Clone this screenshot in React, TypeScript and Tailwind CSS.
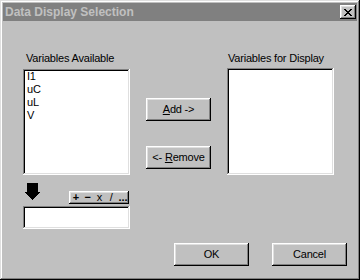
import React from "react";

const raised =
  "shadow-[inset_-1px_-1px_#000,inset_1px_1px_#fff,inset_-2px_-2px_#808080,inset_2px_2px_#dfdfdf]";
const sunken =
  "shadow-[inset_-1px_-1px_#fff,inset_1px_1px_#808080,inset_-2px_-2px_#dfdfdf,inset_2px_2px_#000]";

function CloseX() {
  return (
    <svg width="8" height="7" viewBox="0 0 8 7" shapeRendering="crispEdges">
      <path
        fill="#000"
        d="M0 0h2v1H0z M6 0h2v1H6z M1 1h2v1H1z M5 1h2v1H5z M2 2h4v1H2z M3 3h2v1H3z M2 4h4v1H2z M1 5h2v1H1z M5 5h2v1H5z M0 6h2v1H0z M6 6h2v1H6z"
      />
    </svg>
  );
}

function DownArrow() {
  return (
    <svg width="15" height="17" viewBox="0 0 15 17" shapeRendering="crispEdges">
      <polygon fill="#000" points="2,0 13,0 13,9 15,9 7.5,17 0,9 2,9" />
    </svg>
  );
}

export default function App() {
  return (
    <div className="w-[360px] h-[280px] bg-[#c0c0c0] p-[3px] flex flex-col font-['Liberation_Sans',Arial,sans-serif] text-[11px] leading-[13px] text-black tracking-[-0.2px] shadow-[inset_-1px_-1px_#000,inset_1px_1px_#dfdfdf,inset_-2px_-2px_#808080,inset_2px_2px_#fff]">
      {/* Title bar */}
      <div className="h-[18px] bg-[#808080] flex items-center pl-[2px] pr-[1px] shrink-0">
        <span className="text-[12px] font-bold text-[#c0c0c0] tracking-[0px]">
          Data Display Selection
        </span>
        <div className={`ml-auto w-[16px] h-[14px] bg-[#c0c0c0] flex items-center justify-center ${raised}`}>
          <CloseX />
        </div>
      </div>

      {/* Main row */}
      <div className="flex mt-[31px] pl-[20px]">
        {/* Left column */}
        <div className="w-[107px] flex flex-col">
          <div className="h-[13px] pl-[3px] whitespace-nowrap">Variables Available</div>
          <div className={`mt-[4px] h-[106px] bg-white pl-[4px] pt-[1px] ${sunken}`}>
            <div>I1</div>
            <div>uC</div>
            <div>uL</div>
            <div>V</div>
          </div>
          <div className="h-[31px] flex">
            <div className="mt-[8px] ml-[2px]">
              <DownArrow />
            </div>
            <div
              className={`ml-auto mr-[1px] self-end mb-[2px] w-[60px] h-[13px] flex items-center pl-[1px] font-bold text-[11px] leading-[13px] tracking-[0px] ${raised}`}
            >
              <span className="w-[12px] text-center">+</span>
              <span className="w-[12px] text-center">−</span>
              <span className="w-[12px] text-center font-normal">x</span>
              <span className="w-[12px] text-center font-normal">/</span>
              <span className="w-[12px] text-center">...</span>
            </div>
          </div>
          <div className={`h-[23px] bg-white ${sunken}`} />
        </div>

        {/* Middle column */}
        <div className="ml-[16px] w-[65px] flex flex-col pt-[46px]">
          <div className={`h-[23px] flex items-center justify-center ${raised}`}>
            <span>
              <span className="underline underline-offset-[1px]">A</span>dd -&gt;
            </span>
          </div>
          <div className={`mt-[25px] h-[23px] flex items-center justify-center ${raised}`}>
            <span>
              &lt;- <span className="underline underline-offset-[1px]">R</span>emove
            </span>
          </div>
        </div>

        {/* Right column */}
        <div className="ml-[16px] w-[107px] flex flex-col">
          <div className="h-[13px] pl-[1px] whitespace-nowrap">Variables for Display</div>
          <div className={`mt-[3px] h-[107px] bg-white ${sunken}`} />
        </div>
      </div>

      {/* Bottom buttons */}
      <div className="flex mt-[14px] pl-[171px]">
        <div className={`w-[75px] h-[23px] flex items-center justify-center ${raised}`}>OK</div>
        <div className={`ml-[23px] w-[75px] h-[23px] flex items-center justify-center ${raised}`}>Cancel</div>
      </div>
    </div>
  );
}
